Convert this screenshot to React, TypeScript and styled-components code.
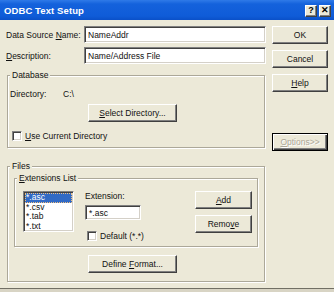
import React from 'react';
import styled, { createGlobalStyle } from 'styled-components';

const Global = createGlobalStyle`
  html, body { margin: 0; padding: 0; background: #d8d4c4; }
  body { font-family: "Liberation Sans", Arial, sans-serif; font-size: 8.5px; color: #111; }
  * { box-sizing: border-box; }
`;

const Window = styled.div`
  width: 334px;
  height: 289px;
  background: #ece9d8;
  border-bottom: 1px solid #716f64;
  display: flex;
  flex-direction: column;
`;

const TitleBar = styled.div`
  height: 20px;
  flex: none;
  display: flex;
  align-items: center;
  justify-content: space-between;
  padding: 0 3px 0 4px;
  background: linear-gradient(180deg, #2f7ae8 0%, #1462dc 20%, #0f5cd8 80%, #0a50c8 100%);
`;

const Title = styled.span`
  color: #fff;
  font-weight: bold;
  font-size: 9.5px;
  letter-spacing: 0.1px;
`;

const CaptionButtons = styled.div`
  display: flex;
  gap: 2px;
  margin-top: 1px;
`;

const CaptionButton = styled.div`
  width: 12px;
  height: 12px;
  background: #ece9d8;
  border: 1px solid;
  border-color: #fff #404040 #404040 #fff;
  box-shadow: inset -1px -1px #808080;
  display: flex;
  align-items: center;
  justify-content: center;
  font-weight: bold;
  font-size: 9px;
  line-height: 1;
  color: #000;
`;

const Content = styled.div`
  flex: 1;
  display: flex;
  gap: 6px;
  padding: 6px 6px 0 6px;
`;

const LeftCol = styled.div`
  width: 260px;
  display: flex;
  flex-direction: column;
`;

const RightCol = styled.div`
  width: 56px;
  display: flex;
  flex-direction: column;
`;

const FieldRow = styled.div<{ $mt?: number }>`
  display: flex;
  align-items: center;
  height: 17px;
  margin-top: ${p => p.$mt ?? 0}px;
`;

const FieldLabel = styled.span`
  width: 78px;
  flex: none;
  white-space: nowrap;
`;

const TextInput = styled.div<{ $w?: number; $h?: number; $mt?: number }>`
  ${p => (p.$w ? `width: ${p.$w}px;` : 'flex: 1;')}
  height: ${p => p.$h ?? 17}px;
  margin-top: ${p => p.$mt ?? 0}px;
  background: #fff;
  border: 1px solid;
  border-color: #808080 #fff #fff #808080;
  box-shadow: inset 1px 1px #404040, inset -1px -1px #d4d0c8;
  display: flex;
  align-items: center;
  padding-left: 3px;
  white-space: nowrap;
  overflow: hidden;
`;

const Group = styled.fieldset<{ $mt?: number; $mx?: string; $pb?: number }>`
  margin: ${p => p.$mt ?? 0}px ${p => p.$mx ?? '1px 0 1px'};
  padding: 0 2px ${p => p.$pb ?? 6}px 2px;
  min-width: 0;
  border: 1px solid #aca899;
  box-shadow: inset 1px 1px #fff, 1px 1px #fff;
  display: flex;
  flex-direction: column;
`;

const Legend = styled.legend`
  padding: 0 2px;
  margin-left: 0;
  line-height: 10px;
  height: 10px;
  background: #ece9d8;
`;

const TextRow = styled.div<{ $mt?: number }>`
  display: flex;
  align-items: center;
  height: 10px;
  margin-top: ${p => p.$mt ?? 0}px;
  white-space: nowrap;
`;

const DirLabel = styled.span`
  width: 53px;
`;

const Button = styled.div<{ $w?: number; $mt?: number; $ml?: number; $default?: boolean; $disabled?: boolean }>`
  width: ${p => p.$w ?? 56}px;
  height: 18px;
  flex: none;
  margin-top: ${p => p.$mt ?? 0}px;
  margin-left: ${p => p.$ml ?? 0}px;
  background: #ece9d8;
  border: 1px solid;
  border-color: ${p => (p.$default ? '#000' : '#fff #404040 #404040 #fff')};
  box-shadow: ${p =>
    p.$default
      ? 'inset 1px 1px #fff, inset -1px -1px #404040, inset -2px -2px #808080'
      : 'inset -1px -1px #808080'};
  display: flex;
  align-items: center;
  justify-content: center;
  white-space: nowrap;
  color: ${p => (p.$disabled ? '#aca899' : '#111')};
  text-shadow: ${p => (p.$disabled ? '1px 1px #fff' : 'none')};
`;

const CheckRow = styled.div<{ $mt?: number; $ml?: number }>`
  display: flex;
  align-items: center;
  gap: 3px;
  margin-top: ${p => p.$mt ?? 0}px;
  margin-left: ${p => p.$ml ?? 0}px;
  white-space: nowrap;
`;

const CheckBox = styled.span`
  width: 10px;
  height: 10px;
  flex: none;
  background: #fff;
  border: 1px solid;
  border-color: #808080 #fff #fff #808080;
  box-shadow: inset 1px 1px #404040, inset -1px -1px #d4d0c8;
`;

const ExtLayout = styled.div`
  display: flex;
  align-items: flex-start;
  margin-top: 8px;
  margin-left: 6px;
  margin-right: 3px;
`;

const ListBox = styled.div`
  width: 51px;
  height: 41px;
  flex: none;
  background: #fff;
  border: 1px solid;
  border-color: #808080 #fff #fff #808080;
  box-shadow: inset 1px 1px #404040, inset -1px -1px #d4d0c8;
  padding: 1px;
  display: flex;
  flex-direction: column;
`;

const ListItem = styled.div<{ $selected?: boolean }>`
  height: 9.5px;
  line-height: 9.5px;
  padding-left: 1px;
  background: ${p => (p.$selected ? '#316ac5' : 'transparent')};
  color: ${p => (p.$selected ? '#fff' : '#111')};
  outline: ${p => (p.$selected ? '1px dotted #f0c080' : 'none')};
  outline-offset: -1px;
`;

const ExtCol = styled.div`
  margin-left: 11px;
  display: flex;
  flex-direction: column;
`;

const ButtonCol = styled.div`
  margin-left: auto;
  display: flex;
  flex-direction: column;
`;

const items = ['*.asc', '*.csv', '*.tab', '*.txt'];

export default function App() {
  return (
    <>
      <Global />
      <Window>
        <TitleBar>
          <Title>ODBC Text Setup</Title>
          <CaptionButtons>
            <CaptionButton>?</CaptionButton>
            <CaptionButton>✕</CaptionButton>
          </CaptionButtons>
        </TitleBar>
        <Content>
          <LeftCol>
            <FieldRow>
              <FieldLabel>Data Source <u>N</u>ame:</FieldLabel>
              <TextInput>NameAddr</TextInput>
            </FieldRow>
            <FieldRow $mt={4}>
              <FieldLabel><u>D</u>escription:</FieldLabel>
              <TextInput>Name/Address File</TextInput>
            </FieldRow>

            <Group $mt={6}>
              <Legend>Database</Legend>
              <TextRow $mt={9}>
                <DirLabel>Directory:</DirLabel>
                <span>C:\</span>
              </TextRow>
              <Button $w={89} $mt={5} $ml={78}>
                <span><u>S</u>elect Directory...</span>
              </Button>
              <CheckRow $mt={9} $ml={2}>
                <CheckBox />
                <span><u>U</u>se Current Directory</span>
              </CheckRow>
            </Group>

            <Group $mt={13} $pb={8}>
              <Legend>Files</Legend>
              <Group $mt={2} $mx="4px 0 4px" $pb={5}>
                <Legend><u>E</u>xtensions List</Legend>
                <ExtLayout>
                  <ListBox>
                    {items.map((it, i) => (
                      <ListItem key={it} $selected={i === 0}>{it}</ListItem>
                    ))}
                  </ListBox>
                  <ExtCol>
                    <TextRow>Extension:</TextRow>
                    <TextInput $w={56} $h={15} $mt={4}>*.asc</TextInput>
                    <CheckRow $mt={11} $ml={2}>
                      <CheckBox />
                      <span>Default (*.*)</span>
                    </CheckRow>
                  </ExtCol>
                  <ButtonCol>
                    <Button $w={57}><span><u>A</u>dd</span></Button>
                    <Button $w={57} $mt={6}><span>Remo<u>v</u>e</span></Button>
                  </ButtonCol>
                </ExtLayout>
              </Group>
              <Button $w={89} $mt={8} $ml={78}>
                <span>Define <u>F</u>ormat...</span>
              </Button>
            </Group>
          </LeftCol>
          <RightCol>
            <Button>OK</Button>
            <Button $mt={6}>Cancel</Button>
            <Button $mt={6}><span><u>H</u>elp</span></Button>
            <Button $mt={41} $default $disabled><span><u>O</u>ptions&gt;&gt;</span></Button>
          </RightCol>
        </Content>
      </Window>
    </>
  );
}
